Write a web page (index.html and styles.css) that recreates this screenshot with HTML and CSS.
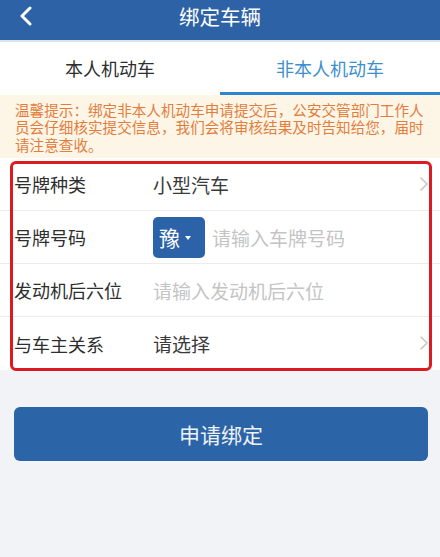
FILE: index.html
```html
<!DOCTYPE html>
<html lang="zh-CN">
<head>
<meta charset="utf-8">
<title>绑定车辆</title>
<link rel="stylesheet" href="styles.css">
</head>
<body>
<header class="topbar">
  <span class="back"><svg width="14" height="20" viewBox="0 0 14 20"><path d="M11 2 L3 10 L11 18" fill="none" stroke="#fff" stroke-width="3" stroke-linecap="round" stroke-linejoin="round"/></svg></span>
  <h1 class="title">绑定车辆</h1>
</header>
<nav class="tabs">
  <div class="tab">本人机动车</div>
  <div class="tab active">非本人机动车</div>
</nav>
<div class="notice">温馨提示：绑定非本人机动车申请提交后，公安交管部门工作人员会仔细核实提交信息，我们会将审核结果及时告知给您，届时请注意查收。</div>
<section class="form">
  <div class="row">
    <span class="label">号牌种类</span>
    <span class="value">小型汽车</span>
    <svg class="chev" width="10" height="16" viewBox="0 0 10 16"><path d="M2 2 L8 8 L2 14" fill="none" stroke="#c6c6c6" stroke-width="1.6" stroke-linecap="round" stroke-linejoin="round"/></svg>
  </div>
  <div class="row">
    <span class="label">号牌号码</span>
    <span class="plate">豫<span class="caret"></span></span>
    <span class="placeholder">请输入车牌号码</span>
  </div>
  <div class="row">
    <span class="label">发动机后六位</span>
    <span class="placeholder wide">请输入发动机后六位</span>
  </div>
  <div class="row last">
    <span class="label">与车主关系</span>
    <span class="value">请选择</span>
    <svg class="chev" width="10" height="16" viewBox="0 0 10 16"><path d="M2 2 L8 8 L2 14" fill="none" stroke="#c6c6c6" stroke-width="1.6" stroke-linecap="round" stroke-linejoin="round"/></svg>
  </div>
  <div class="highlight"></div>
</section>
<div class="actions">
  <button class="submit">申请绑定</button>
</div>
</body>
</html>
```

FILE: styles.css
```css
* { box-sizing: border-box; }
html, body { margin: 0; padding: 0; }
body {
  background: #f2f3f7;
  font-family: "Noto Sans CJK SC", "Noto Sans", sans-serif;
  color: #333;
  width: 440px;
  min-height: 557px;
}
.topbar {
  height: 42px;
  background: #2d62a6;
  border-bottom: 2px solid #dbe3ee;
  display: flex;
  align-items: center;
  justify-content: center;
  position: relative;
}
.back {
  position: absolute;
  left: 19px;
  top: 6px;
  width: 14px;
  height: 20px;
  display: flex;
}
.title {
  margin: 0;
  font-size: 20.5px;
  font-weight: normal;
  color: #fff;
  line-height: 32px;
  margin-top: -8px;
}
.tabs {
  display: flex;
  height: 53px;
  background: #fff;
}
.tab {
  flex: 1;
  display: flex;
  align-items: center;
  justify-content: center;
  font-size: 18px;
  color: #2e2e2e;
  border-bottom: 3px solid transparent;
  padding-top: 1px;
}
.tab.active {
  color: #3d8fce;
  border-bottom-color: #2f85cc;
}
.notice {
  background: #fdf6e7;
  color: #e47c3c;
  font-size: 14.6px;
  line-height: 17.3px;
  padding: 6px 15px 5px 15px;
  height: 63px;
  letter-spacing: 0;
}
.form {
  background: #fff;
  position: relative;
}
.row {
  height: 53px;
  display: flex;
  align-items: center;
  padding-left: 14px;
  border-bottom: 1px solid #ececec;
  position: relative;
}
.row.last { border-bottom: none; }
.label {
  width: 139px;
  font-size: 18px;
  color: #2e2e2e;
  flex-shrink: 0;
}
.value {
  font-size: 19px;
  color: #3a3a3a;
}
.placeholder {
  font-size: 19px;
  color: #c4c4c4;
  margin-left: 7px;
}
.placeholder.wide { margin-left: 0; }
.chev {
  position: absolute;
  right: 11px;
  top: 18px;
}
.plate {
  width: 52px;
  height: 41px;
  border-radius: 5px;
  background: #2b62a8;
  color: #fff;
  font-size: 21px;
  display: flex;
  align-items: center;
  padding-left: 6px;
  gap: 5px;
}
.caret {
  width: 0;
  height: 0;
  border-left: 3.5px solid transparent;
  border-right: 3.5px solid transparent;
  border-top: 4px solid #fff;
  margin-top: 1px;
}
.highlight {
  position: absolute;
  left: 10px;
  right: 8px;
  top: 3px;
  bottom: -1px;
  border: 3px solid #dc1a1f;
  border-radius: 6px;
  pointer-events: none;
}
.actions {
  padding: 37px 12px 0 14px;
}
.submit {
  width: 100%;
  height: 54px;
  border: none;
  border-radius: 6px;
  background: #2c64a8;
  color: #eef2f7;
  font-family: "Noto Sans CJK SC", "Noto Sans", sans-serif;
  font-size: 21px;
  display: block;
}
```
